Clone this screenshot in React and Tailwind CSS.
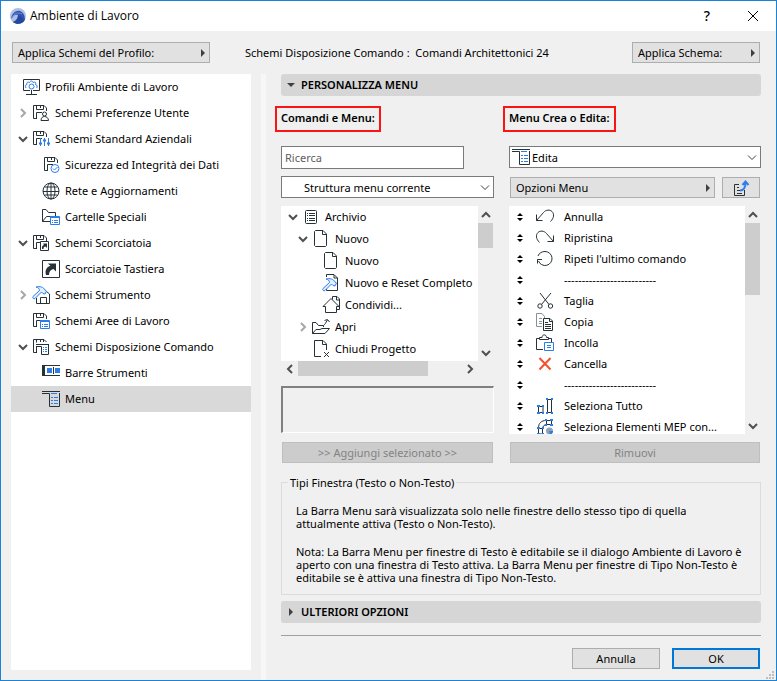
import { useState } from 'react';

const DARK = '#263238';
const BLUE = '#2b7de9';

// Shared 18x18 canvas for the small icons
function Icon({ children }) {
    return (
        <svg width="18" height="18" viewBox="0 0 18 18" fill="none" stroke={DARK} className="shrink-0" aria-hidden="true">
            {children}
        </svg>
    );
}

// Floppy disk outline, the base of most scheme icons
function Floppy() {
    return (
        <>
            <path d="M5 14.5H1.5V1.5H12L14.5 4V7" />
            <path d="M4.5 1.5V5.5H11.5V1.5M8.5 2V4" />
            <path d="M4.5 14.5V8.5H10" />
        </>
    );
}

// Small blue list window placed at the lower right of an icon
function ListWindow() {
    return (
        <g stroke={BLUE}>
            <path d="M8.5 8.5H17.5V16.5H8.5Z" fill="#fff" />
            <path d="M8 9.5H18M10 12.5H11M12 12.5H16M10 14.5H11M12 14.5H16" />
        </g>
    );
}

function Hammer() {
    return (
        <path
            d="M4 1C8 0 11.5 1 13 4L14.5 5L13 8L11 7.5L9.5 6L3 12.5C2 13.5 0 12 1 10.5L7.5 4.5C7.5 2.5 6 1.5 4 1Z"
            stroke={BLUE}
            fill="#e3efff"
        />
    );
}

const icons = {
    profile: (
        <Icon>
            <path d="M8 12.5H1.5V1.5H17.5V12.5H11M9.5 12V16M4 16.5H15" />
            <path d="M4 10C3 8 3 7 5 6.5C4 4.5 6 3.5 7.5 4.5C8.5 2.5 10.5 2.5 11 4.5C13 3.5 14.5 4.5 13.5 6.5C15.5 7 15.5 9 14.5 10" stroke={BLUE} />
            <circle cx="9.5" cy="8.5" r="2.5" stroke={BLUE} />
        </Icon>
    ),
    user: (
        <Icon>
            <Floppy />
            <circle cx="12.5" cy="10" r="2" fill="#fff" />
            <path d="M9 16.5C9 14 10.5 12.5 12.5 12.5S16.5 14 16.5 16.5Z" fill="#fff" />
        </Icon>
    ),
    company: (
        <Icon>
            <Floppy />
            <path d="M8.5 8V16M12.5 8V16M16.5 8V16" stroke={BLUE} />
            <path d="M7 13.5H10M11 10.5H14M15 13.5H18" stroke={BLUE} strokeWidth="2" />
        </Icon>
    ),
    security: (
        <Icon>
            <g transform="translate(1 0)"><Floppy /></g>
            <circle cx="13" cy="12.5" r="4" stroke={BLUE} fill="#fff" />
            <path d="M11 12.5L12.5 14L15.5 11" stroke={BLUE} />
        </Icon>
    ),
    network: (
        <Icon>
            <circle cx="9" cy="9" r="8" />
            <ellipse cx="9" cy="9" rx="4" ry="8" />
            <path d="M9 1V17M1 9.5H17M2.5 5H15.5M2.5 13H15.5" />
        </Icon>
    ),
    folder: (
        <Icon>
            <path d="M8 13.5H.5V1.5H4L6.5 4.5H13.5V8M.5 13.5L4.5 8.5H9" />
            <ListWindow />
        </Icon>
    ),
    shortcut: (
        <Icon>
            <Floppy />
            <path d="M8.5 7.5H16.5V16.5H8.5Z" fill="#fff" />
            <path d="M10 15C9.5 12 11 11 12 11L11 9.5H15V14L13.5 12.5C12 12.5 11.5 13.5 11.5 15Z" fill={DARK} stroke="none" />
        </Icon>
    ),
    keyboard: (
        <Icon>
            <path d="M.5 .5H17.5V17.5H.5Z" />
            <path d="M4 15C2.5 9.5 5.5 6.5 8.5 6L6 3.5H14V11.5L11.5 9C8.5 9.5 7 11.5 7 15Z" fill={DARK} stroke="none" />
        </Icon>
    ),
    tool: (
        <Icon>
            <path d="M4.5 12V17.5H17.5V8L14.5 5.5H12M8.5 17V11.5H14.5V17M11.5 5.5V8" />
            <Hammer />
        </Icon>
    ),
    workspace: (
        <Icon>
            <Floppy />
            <ListWindow />
        </Icon>
    ),
    layout: (
        <Icon>
            <path d="M5 14.5H1.5V1.5H12L14.5 4M4.5 1.5V4.5M8.5 1.5V4M11.5 1.5V4M4.5 14.5V8.5M4 6.5H17M4 8.5H9.5V16.5H16.5V6.5" />
            <path d="M11 9.5H12M13 9.5H15M11 11.5H12M13 11.5H15M11 13.5H12M13 13.5H15" stroke={BLUE} />
        </Icon>
    ),
    toolbars: (
        <Icon>
            <path d="M0 1.5H18M0 11.5H18" />
            <path d="M0 1H3V12H0Z" fill={DARK} stroke="none" />
            <path d="M5 4H10V9H5ZM13 4H18V9H13Z" fill={BLUE} stroke="none" />
            <path d="M11.5 3V10" />
        </Icon>
    ),
    menu: (
        <Icon>
            <path d="M0 1.5H18M0 3.5H7M0 3.5H7.5V16.5H17.5V3" />
            <path d="M9 3.5H15M9 7.5H11M12 7.5H16M9 10.5H11M12 10.5H16M9 13.5H11M12 13.5H16" stroke={BLUE} />
        </Icon>
    ),
    archive: (
        <Icon>
            <rect x="3.5" y="2.5" width="11" height="13" rx="1" />
            <path d="M5 5.5H6M7 5.5H13M5 7.5H6M7 7.5H13M5 10.5H6M7 10.5H13M5 12.5H6M7 12.5H13" />
        </Icon>
    ),
    page: (
        <Icon>
            <path d="M3.5 .5H11L14.5 4V15.5L13.5 16.5H3.5L2.5 15.5V1.5ZM10.5 1V4.5H14.5" />
        </Icon>
    ),
    reset: (
        <Icon>
            <path d="M4.5 3V.5H12L15.5 4V16.5H4.5V14M12 1V4H15.5" />
            <g transform="translate(0 4)"><Hammer /></g>
        </Icon>
    ),
    share: (
        <Icon>
            <path d="M9 2.5L17 10.5H14.5V16.5H3.5V10.5H1L9 2.5M10.5 3.5V.5H15L17.5 3V13.5H15M14.5 1V4H17.5" />
        </Icon>
    ),
    open: (
        <Icon>
            <path d="M.5 4.5H4L6.5 7.5H11.5V9M.5 4.5V15.5L4 11.5H8L10 10.5H17.5L13 15.5H.5M11.5 7.5C13 6.5 13.5 5 15.5 2M12.5 2.5L15.5 1.5L17.5 4" />
        </Icon>
    ),
    close: (
        <Icon>
            <path d="M9 16.5H2.5V.5H11L14.5 4V10M10.5 1V4.5H14.5M12 12L17 17M17 12L12 17" />
        </Icon>
    ),
    undo: (
        <Icon>
            <path d="M.5 6.5V12.5H6.5M.5 12.5L7.5 4.5C10 1.5 14 1.5 16 3.5C18.5 6 18 10 14.5 13.5" />
        </Icon>
    ),
    redo: (
        <Icon>
            <path d="M17.5 6.5V12.5H11.5M17.5 12.5L10.5 4.5C8 1.5 4 1.5 2 3.5C-.5 6 0 10 3.5 13.5" />
        </Icon>
    ),
    repeat: (
        <Icon>
            <path d="M6 9.5H1.5V13.5M2 6C3 3 6 1.5 9 1.5A7 7 0 1 1 2.5 11" />
        </Icon>
    ),
    cut: (
        <Icon>
            <path d="M4 1L13 12.5M15 1L5.5 12.5" />
            <circle cx="4" cy="14" r="2.2" />
            <circle cx="14.5" cy="14" r="2.2" />
        </Icon>
    ),
    copy: (
        <Icon>
            <path d="M6 13.5H.5V.5H6L8.5 3.5V5M3 5.5H6M3 8.5H6M3 10.5H6" stroke="#8a9195" />
            <path d="M7.5 5.5H14L16.5 8V17.5H7.5ZM13.5 6V8.5H16M9 9.5H12M9 11.5H15M9 13.5H15M9 15.5H15" />
        </Icon>
    ),
    paste: (
        <Icon>
            <path d="M7 15.5H.5V4.5H4M12 4.5H15.5V8M3.5 5.5V3.5H6C6 0 10.5 0 10.5 3.5H12.5V5.5Z" />
            <path d="M8.5 8.5H17.5V16.5H8.5ZM11 11.5H15M11 13.5H15" stroke={BLUE} fill="#fff" />
        </Icon>
    ),
    remove: (
        <Icon>
            <path d="M3.5 3L14.5 14.5M14.5 3L3.5 14.5" stroke="#f4512c" strokeWidth="2" />
        </Icon>
    ),
    selectAll: (
        <Icon>
            <path d="M2.5 9.5H7V15.5H2.5ZM11.5 2.5H15.5V15.5H11.5Z" />
            <path d="M1 8H4V10H1ZM6 8H8V10H6ZM1 15H4V17H1ZM6 15H8V17H6ZM10 1H12V3H10ZM15 1H17V3H15ZM10 15H12V17H10ZM15 15H17V17H15Z" fill={BLUE} stroke="none" />
        </Icon>
    ),
    selectMep: (
        <Icon>
            <path d="M2.5 10C2.5 5 5.5 2.5 10 2.5H15.5V6.5H11C8.5 6.5 6.5 8 6.5 11V16H2.5ZM10.5 2V7M2 10.5H7" />
            <path d="M9 1H11V3H9ZM14 1H17V3H14ZM9 6H11V8H9ZM14 6H17V8H14ZM1 9H4V11H1ZM6 9H8V11H6ZM1 15H4V17H1ZM6 15H8V17H6Z" fill={BLUE} stroke="none" />
            <circle cx="13.5" cy="13" r="3.5" fill="#8ea4b8" stroke="none" />
            <path d="M13.5 13H17C17 15 15.5 16.5 13.5 16.5Z" fill={BLUE} stroke="none" />
        </Icon>
    ),
};

const schemes = [
    { level: 0, icon: 'profile', label: 'Profili Ambiente di Lavoro' },
    { level: 1, icon: 'user', label: 'Schemi Preferenze Utente', arrow: 'closed' },
    { level: 1, icon: 'company', label: 'Schemi Standard Aziendali', arrow: 'open' },
    { level: 2, icon: 'security', label: 'Sicurezza ed Integrità dei Dati' },
    { level: 2, icon: 'network', label: 'Rete e Aggiornamenti' },
    { level: 2, icon: 'folder', label: 'Cartelle Speciali' },
    { level: 1, icon: 'shortcut', label: 'Schemi Scorciatoia', arrow: 'open' },
    { level: 2, icon: 'keyboard', label: 'Scorciatoie Tastiera' },
    { level: 1, icon: 'tool', label: 'Schemi Strumento', arrow: 'closed' },
    { level: 1, icon: 'workspace', label: 'Schemi Aree di Lavoro' },
    { level: 1, icon: 'layout', label: 'Schemi Disposizione Comando', arrow: 'open' },
    { level: 2, icon: 'toolbars', label: 'Barre Strumenti' },
    { level: 2, icon: 'menu', label: 'Menu' },
];

const commands = [
    { level: 1, icon: 'archive', label: 'Archivio', arrow: 'open' },
    { level: 2, icon: 'page', label: 'Nuovo', arrow: 'open' },
    { level: 3, icon: 'page', label: 'Nuovo' },
    { level: 3, icon: 'reset', label: 'Nuovo e Reset Completo' },
    { level: 3, icon: 'share', label: 'Condividi...' },
    { level: 2, icon: 'open', label: 'Apri', arrow: 'closed' },
    { level: 2, icon: 'close', label: 'Chiudi Progetto' },
];

const menuItems = [
    { icon: 'undo', label: 'Annulla' },
    { icon: 'redo', label: 'Ripristina' },
    { icon: 'repeat', label: "Ripeti l'ultimo comando" },
    { label: '--------------------------' },
    { icon: 'cut', label: 'Taglia' },
    { icon: 'copy', label: 'Copia' },
    { icon: 'paste', label: 'Incolla' },
    { icon: 'remove', label: 'Cancella' },
    { label: '--------------------------' },
    { icon: 'selectAll', label: 'Seleziona Tutto' },
    { icon: 'selectMep', label: 'Seleziona Elementi MEP con...' },
];

// Chevron used by trees and scrollbars
function Chevron({ direction, color = '#505050' }) {
    const paths = {
        up: 'M1 7L5 3L9 7',
        down: 'M1 3L5 7L9 3',
        left: 'M7 1L3 5L7 9',
        right: 'M3 1L7 5L3 9',
    };
    return (
        <svg width="10" height="10" viewBox="0 0 10 10" fill="none" stroke={color} strokeWidth="2" className="shrink-0" aria-hidden="true">
            <path d={paths[direction]} />
        </svg>
    );
}

function SelectArrow() {
    return (
        <svg width="10" height="6" viewBox="0 0 10 6" fill="none" stroke="#404040" className="pointer-events-none absolute top-[9px] right-1" aria-hidden="true">
            <path d="M1 .5L5 4.5L9 .5" />
        </svg>
    );
}

function Triangle({ open }) {
    return (
        <svg width="8" height="8" viewBox="0 0 8 8" fill="#404040" className="shrink-0" aria-hidden="true">
            <path d={open ? 'M0 2H8L4 6Z' : 'M2 0L6 4L2 8Z'} />
        </svg>
    );
}

const indents = ['pl-[11px]', 'pl-[7px]', 'pl-[17px]', 'pl-[27px]'];

function TreeRow({ item, rowHeight, selected, onSelect }) {
    return (
        <li>
            <button
                onClick={onSelect}
                className={`flex w-full items-center text-left whitespace-nowrap ${rowHeight} ${indents[item.level]} ${selected ? 'bg-[#d9d9d9]' : ''}`}
            >
                {item.level > 0 && (
                    <span className="mr-1 flex w-[10px] shrink-0">
                        {item.arrow === 'open' && <Chevron direction="down" />}
                        {item.arrow === 'closed' && <Chevron direction="right" color="#a6a6a6" />}
                    </span>
                )}
                {icons[item.icon]}
                <span className="ml-[5px] pb-[2px]">{item.label}</span>
            </button>
        </li>
    );
}

function MenuButton({ children, className }) {
    return (
        <button className={`flex h-[21px] items-center justify-between border border-[#adadad] bg-[#e1e1e1] pr-[2px] pl-[5px] whitespace-nowrap ${className}`}>
            {children}
            <Triangle />
        </button>
    );
}

function SectionHeader({ title, open }) {
    return (
        <button className="flex h-[22px] w-full items-center gap-[6px] rounded-[3px] bg-[#d6d6d6] pl-[6px] font-semibold">
            <Triangle open={open} />
            <span className="pb-[2px]">{title}</span>
        </button>
    );
}

function VerticalScrollbar({ thumb }) {
    return (
        <div className="flex w-[15px] shrink-0 flex-col items-center">
            <button aria-label="Su" className="flex h-[17px] w-full items-center justify-center"><Chevron direction="up" /></button>
            <div className={`w-full bg-[#cdcdcd] ${thumb}`} />
            <button aria-label="Giù" className="mt-auto flex h-[17px] w-full items-center justify-center"><Chevron direction="down" /></button>
        </div>
    );
}

export default function App() {
    const [selectedScheme, setSelectedScheme] = useState('Menu');
    const [search, setSearch] = useState('');

    return (
        <div className="flex min-h-screen flex-col border border-[#1883d7] bg-[#f0f0f0] font-['Noto_Sans','Open_Sans',sans-serif] text-[11px] leading-[13px] text-black">
            {/* Title bar */}
            <header className="flex h-[30px] items-center bg-white pl-[9px]">
                <svg width="16" height="16" viewBox="0 0 16 16" className="mr-1" aria-hidden="true">
                    <circle cx="8" cy="8" r="8" fill="#aebfe5" />
                    <path d="M1 11C2 5 6 2 10 3C13 4 15 7 15 12C12 16 7 17 3 14C6 13 8 10 8 7C5 6 3 8 1 11Z" fill="#3156b0" />
                    <path d="M8 7C8 11 6 13 3 14C7 17 12 16 14 13C13 10 11 8 8 7Z" fill="#2647a0" />
                    <path d="M2 10C4 5 8 4 12 6" fill="none" stroke="#6d8fd8" />
                </svg>
                <h1 className="font-['Open_Sans',sans-serif] text-[12px] leading-4">Ambiente di Lavoro</h1>
                <button aria-label="Aiuto" className="ml-auto w-[46px] text-[14px] leading-4 font-medium">?</button>
                <button aria-label="Chiudi" className="flex w-[46px] justify-center">
                    <svg width="10" height="10" viewBox="0 0 10 10" stroke="#000" aria-hidden="true">
                        <path d="M0 0L10 10M10 0L0 10" />
                    </svg>
                </button>
            </header>

            {/* Profile and scheme selectors */}
            <div className="flex items-center pt-[11px] pr-4 pb-[11px] pl-[11px]">
                <MenuButton className="w-[198px]">Applica Schemi del Profilo:</MenuButton>
                <p className="ml-[35px] whitespace-pre">Schemi Disposizione Comando :  Comandi Architettonici 24</p>
                <MenuButton className="ml-auto w-[128px]">Applica Schema:</MenuButton>
            </div>

            <div className="flex grow">
                <nav className="mb-[10px] ml-[10px] w-[240px] shrink-0 bg-white">
                    <ul>
                        {schemes.map((item) => (
                            <TreeRow
                                key={item.label}
                                item={item}
                                rowHeight="h-[26px]"
                                selected={selectedScheme === item.label}
                                onSelect={() => setSelectedScheme(item.label)}
                            />
                        ))}
                    </ul>
                </nav>
                <div className="ml-[10px] w-[5px] shrink-0 bg-[#f7f7f7]" />

                <main className="mr-[15px] ml-[15px] flex min-w-0 grow flex-col">
                    <SectionHeader title="PERSONALIZZA MENU" open />

                    <div className="mt-[10px] grid grid-cols-[213fr_252fr] gap-x-[15px]">
                        {/* Available commands */}
                        <section className="flex min-w-0 flex-col">
                            <h2 className="-ml-[6px] self-start border-2 border-[#fb1414] px-1 pt-1 pb-[6px] leading-[12px] font-semibold">Comandi e Menu:</h2>
                            <input
                                aria-label="Ricerca"
                                placeholder="Ricerca"
                                value={search}
                                onChange={(e) => setSearch(e.target.value)}
                                className="mt-[14px] h-[23px] w-[183px] border border-[#7a7a7a] bg-white px-[3px] placeholder:text-[#606060]"
                            />
                            <div className="relative mt-[7px]">
                                <select aria-label="Struttura" className="block h-[22px] w-full appearance-none border border-[#7a7a7a] bg-white pl-[22px]">
                                    <option>Struttura menu corrente</option>
                                </select>
                                <SelectArrow />
                            </div>
                            <div className="mt-2 mr-px flex h-[155px]">
                                <ul className="min-w-0 grow overflow-hidden bg-white">
                                    {commands.map((item) => (
                                        <TreeRow key={item.icon + item.level} item={item} rowHeight="h-[22px]" />
                                    ))}
                                </ul>
                                <VerticalScrollbar thumb="h-[25px]" />
                            </div>
                            <div className="mr-4 flex h-[15px] items-center">
                                <button aria-label="Sinistra" className="flex w-[17px] justify-center"><Chevron direction="left" /></button>
                                <div className="h-full w-[130px] bg-[#cdcdcd]" />
                                <button aria-label="Destra" className="ml-auto flex w-[17px] justify-center"><Chevron direction="right" /></button>
                            </div>
                            <div className="mt-[10px] h-[47px] border-t-2 border-r border-b border-l-2 border-t-[#808080] border-r-white border-b-white border-l-[#808080]" />
                            <button disabled className="mx-px mt-[9px] h-[21px] border border-[#bfbfbf] bg-[#cccccc] text-[#838383]">&gt;&gt; Aggiungi selezionato &gt;&gt;</button>
                        </section>

                        {/* Menu being edited */}
                        <section className="flex min-w-0 flex-col">
                            <h2 className="-ml-[6px] self-start border-2 border-[#fb1414] px-1 pt-1 pb-[6px] leading-[12px] font-semibold">Menu Crea o Edita:</h2>
                            <div className="relative mt-[14px]">
                                <select aria-label="Menu" className="block h-[22px] w-full appearance-none border border-[#7a7a7a] bg-white pl-[22px]">
                                    <option>Edita</option>
                                </select>
                                <span className="pointer-events-none absolute top-[2px] left-[3px]">{icons.menu}</span>
                                <SelectArrow />
                            </div>
                            <div className="mx-px mt-[9px] flex gap-[7px]">
                                <MenuButton className="grow">Opzioni Menu</MenuButton>
                                <button aria-label="Esporta" className="flex h-[21px] w-[38px] items-center justify-center border border-[#adadad] bg-[#e1e1e1]">
                                    <Icon>
                                        <path d="M7 5.5H2.5V16.5H12.5V11M5 8.5H7M5 11.5H10M5 14.5H10" />
                                        <path d="M8 11.5C12 11.5 13.5 9 13.5 3.5M10.5 6L13.5 2.5L16.5 6" stroke={BLUE} strokeWidth="2" />
                                    </Icon>
                                </button>
                            </div>
                            <div className="mt-2 mr-px flex h-[228px]">
                                <ul className="min-w-0 grow overflow-hidden bg-white">
                                    {menuItems.map((item, index) => (
                                        <li key={index} className="flex h-[21px] items-center whitespace-nowrap">
                                            <svg width="6" height="8" viewBox="0 0 6 8" className="mr-[13px] ml-2 shrink-0" aria-hidden="true">
                                                <path d="M0 3L3 0L6 3ZM0 5L3 8L6 5Z" />
                                            </svg>
                                            <span className="mr-[10px] w-[18px] shrink-0">{icons[item.icon]}</span>
                                            {item.label}
                                        </li>
                                    ))}
                                </ul>
                                <VerticalScrollbar thumb="h-[72px]" />
                            </div>
                            <button disabled className="mx-px mt-2 h-[21px] border border-[#bfbfbf] bg-[#cccccc] text-[#838383]">Rimuovi</button>
                        </section>
                    </div>

                    {/* Window type notes */}
                    <fieldset className="mt-[13px] border border-[#dcdcdc] pr-3 pb-[10px] pl-[14px]">
                        <legend className="-ml-2 px-[2px]">Tipi Finestra (Testo o Non-Testo)</legend>
                        <p className="mt-[15px]">La Barra Menu sarà visualizzata solo nelle finestre dello stesso tipo di quella attualmente attiva (Testo o Non-Testo).</p>
                        <p className="mt-[15px]">Nota: La Barra Menu per finestre di Testo è editabile se il dialogo Ambiente di Lavoro è aperto con una finestra di Testo attiva. La Barra Menu per finestre di Tipo Non-Testo è editabile se è attiva una finestra di Tipo Non-Testo.</p>
                    </fieldset>

                    <div className="mt-[6px]">
                        <SectionHeader title="ULTERIORI OPZIONI" />
                    </div>

                    {/* Dialog actions */}
                    <footer className="mt-3 flex justify-end gap-3 border-t border-[#a0a0a0] pt-3 pr-px">
                        <button className="h-[21px] w-[88px] border border-[#adadad] bg-[#e1e1e1]">Annulla</button>
                        <button className="h-[21px] w-[88px] border-2 border-[#0078d7] bg-[#e1e1e1]">OK</button>
                    </footer>
                    <svg width="8" height="8" viewBox="0 0 8 8" fill="#bfbfbf" className="mt-auto -mr-[13px] mb-px self-end" aria-hidden="true">
                        <path d="M6 0H8V2H6ZM3 3H5V5H3ZM6 3H8V5H6ZM0 6H2V8H0ZM3 6H5V8H3ZM6 6H8V8H6Z" />
                    </svg>
                </main>
            </div>
        </div>
    );
}
